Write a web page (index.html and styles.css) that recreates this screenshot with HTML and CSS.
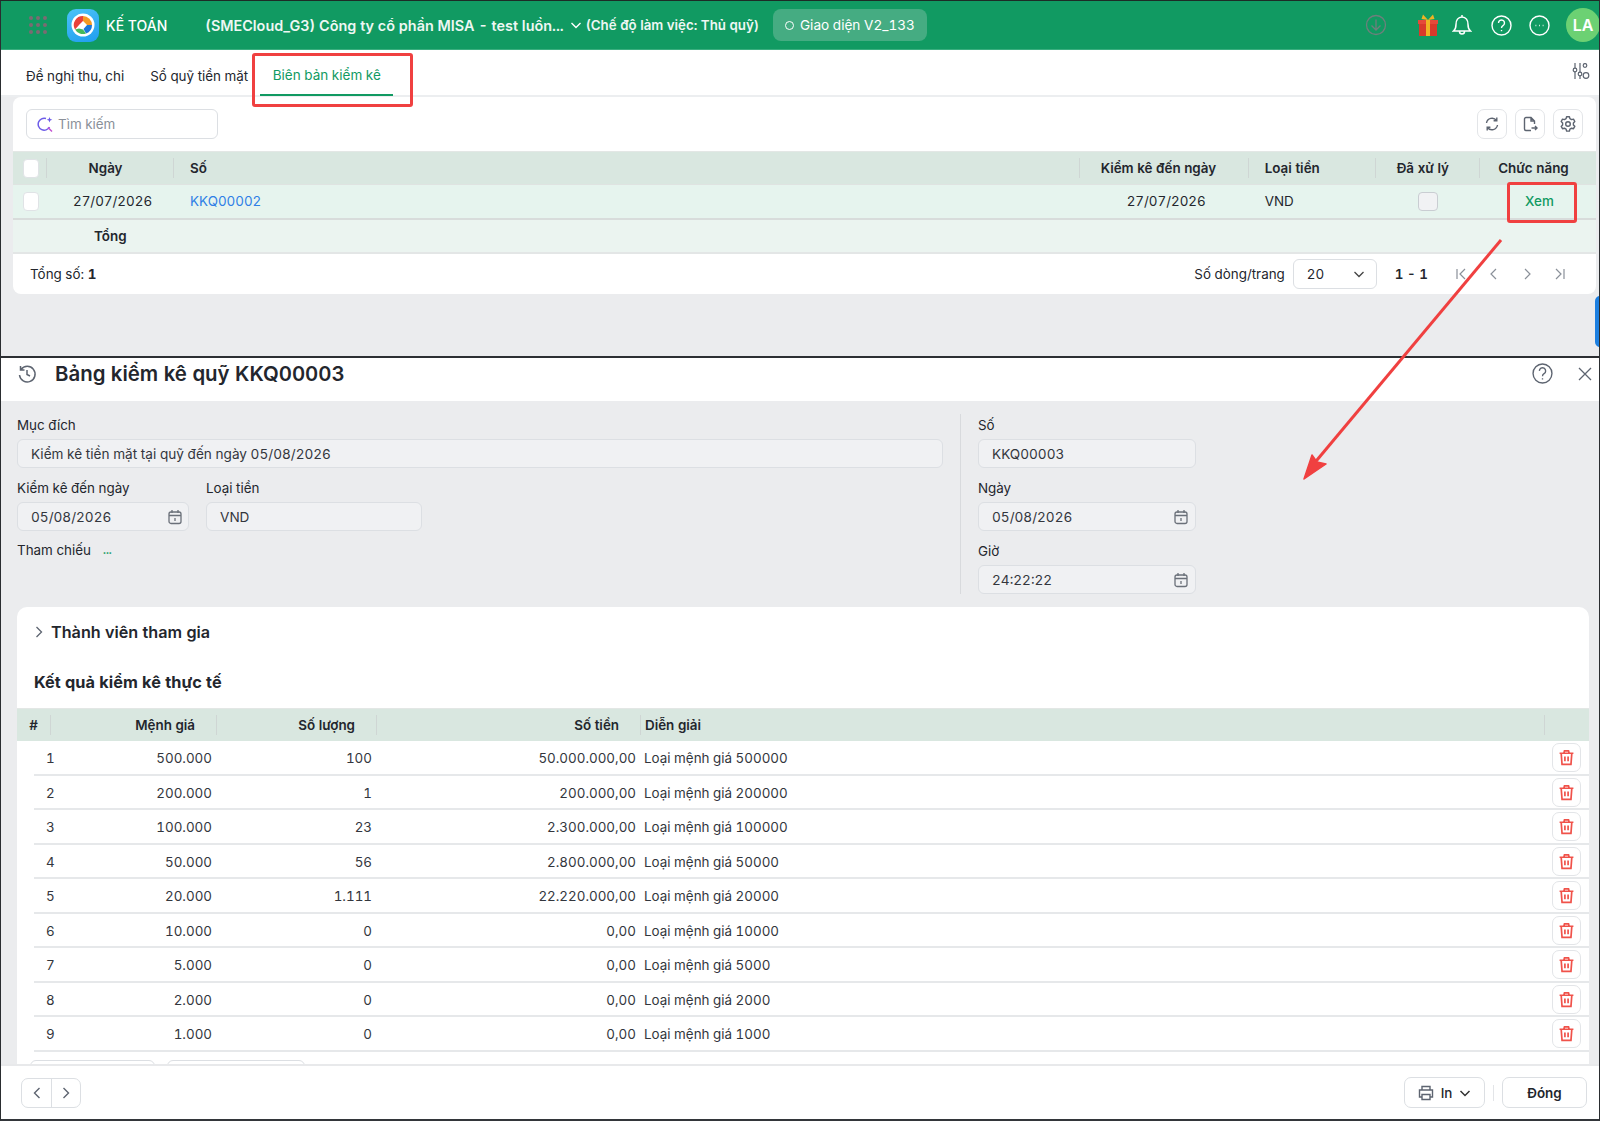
FILE: index.html
```html
<!DOCTYPE html>
<html lang="vi">
<head>
  <meta charset="UTF-8" />
  <title>Biên bản kiểm kê</title>
  <link rel="stylesheet" href="styles.css">
</head>
<body>
  <svg class="sprite" width="0" height="0">
    <symbol id="i-cal" viewBox="0 0 16 16" fill="none" stroke="currentColor" stroke-width="1.3">
      <rect x="2" y="3" width="12" height="11.5" rx="2"/><path d="M5 1v3M11 1v3M2 6.5h12M8 9v3"/>
    </symbol>
    <symbol id="i-trash" viewBox="0 0 16 16" fill="none" stroke="currentColor" stroke-width="1.6">
      <path d="M1.5 4h13M5.5 4l.6-2.3h3.8L10.500 4M3 4l.8 10.500h8.400L13 4M6.500 7v4.500M9.500 7v4.500"/>
    </symbol>
  </svg>

  <div class="page">
    <section class="win-top">
      <header class="topbar">
        <div class="apps">
          <i></i><i></i><i></i><i></i><i></i><i></i><i></i><i></i><i></i>
        </div>
        <div class="logo">
          <svg width="24" height="24" viewBox="0 0 24 24">
            <circle cx="12" cy="12" r="11.500" fill="#fff"/>
            <path d="M12 3a9 9 0 0 1 9 9h-5l-4-4z" fill="#f59a23"/>
            <path d="M21 12a9 9 0 0 1-6 8.500L12.500 16l3.500-4z" fill="#1c78d8"/>
            <path d="M15 20.500A9 9 0 0 1 4 16.500l4-1 4 1z" fill="#45b95c"/>
            <path d="M4 16.500A9 9 0 0 1 12 3v5l-4 4z" fill="#e8413a"/>
            <rect x="9.500" y="9.500" width="5" height="5" fill="#fff" transform="rotate(45 12 12)"/>
          </svg>
        </div>
        <span class="app-name">KẾ TOÁN</span>
        <span class="company">(SMECloud_G3) Công ty cổ phần MISA - test luồn...</span>
        <svg class="co-caret" width="12" height="12" viewBox="0 0 12 12" fill="none" stroke="#fff" stroke-width="1.4"><path d="M1.500 4l4.500 4.500L10.500 4"/></svg>
        <span class="work-mode">(Chế độ làm việc: Thủ quỹ)</span>
        <span class="theme-badge"><i class="theme-dot"></i>Giao diện V2_133</span>
        <div class="top-icons">
          <svg class="ic-down" width="22" height="22" viewBox="0 0 22 22" fill="none" stroke="#6f7f7c" stroke-width="1.300"><circle cx="11" cy="11" r="9.500"/><path d="M11 5.500v10.500M6.500 11.500L11 16l4.500-4.500"/></svg>
          <svg class="ic-gift" width="22" height="24" viewBox="0 0 22 24"><rect x="2" y="9" width="18" height="14" fill="#d8392b"/><rect x="1" y="7" width="20" height="4" fill="#e5493a"/><rect x="9" y="7" width="4" height="16" fill="#f0b323"/><path d="M11 7L6 1.500 4.500 6zM11 7l5-5.500L17.500 6z" fill="#f0b323"/></svg>
          <svg class="ic-bell" width="20" height="22" viewBox="0 0 20 22" fill="none" stroke="#fff" stroke-width="1.500"><path d="M1.500 17h17c-1.800-1.500-2.500-3-2.500-6.500C16 6.500 14 3 10 3s-6 3.500-6 7.500C4 14 3.300 15.500 1.500 17zM7.500 17.500a2.500 2.500 0 0 0 5 0M10 1v2"/></svg>
          <svg class="ic-help" width="21" height="21" viewBox="0 0 21 21" fill="none" stroke="#fff" stroke-width="1.400"><circle cx="10.500" cy="10.500" r="9.500"/><path d="M7.500 8a3 3 0 1 1 4.500 2.600c-1 .6-1.500 1.200-1.500 2.400"/><path d="M10.500 15v1.200"/></svg>
          <svg class="ic-more" width="21" height="21" viewBox="0 0 21 21" fill="none" stroke="#fff" stroke-width="1.400"><circle cx="10.500" cy="10.500" r="9.500"/><path d="M6.500 10.500h.8M10.100 10.500h.8M13.700 10.500h.8"/></svg>
          <span class="avatar">LA</span>
        </div>
      </header>

      <nav class="tabs">
        <a class="tab">Đề nghị thu, chi</a>
        <a class="tab">Sổ quỹ tiền mặt</a>
        <a class="tab tab-active">Biên bản kiểm kê</a>
        <svg class="tab-tune" width="18" height="18" viewBox="0 0 18 18" fill="none" stroke="#5d6470" stroke-width="1.200"><path d="M3 1v16M8 1v16M13 1v4"/><circle cx="3" cy="8" r="1.800" fill="#fff"/><circle cx="8" cy="12" r="1.800" fill="#fff"/><circle cx="13" cy="3.500" r="1.800" fill="#fff"/><circle cx="14" cy="13.500" r="2.800"/></svg>
      </nav>

      <div class="list-card">
        <div class="toolbar">
          <label class="search">
            <svg width="17" height="17" viewBox="0 0 17 17" fill="none" stroke="#6d5ce8" stroke-width="1.500"><path d="M9 2.500a6 6 0 1 0 3.500 8.500"/><path d="M11 11.500l4 4" stroke="#c24fd0"/><path d="M12.500 1l.8 2 2 .8-2 .8-.8 2-.8-2-2-.8 2-.8z" fill="#6d5ce8" stroke="none"/></svg>
            <span>Tìm kiếm</span>
          </label>
          <div class="tool-btns">
            <button class="tool-btn"><svg width="16" height="16" viewBox="0 0 16 16" fill="none" stroke="#5d6470" stroke-width="1.400"><path d="M2.500 7a5.600 5.600 0 0 1 10-2.500M13.500 9a5.600 5.600 0 0 1-10 2.500M12.800 1.500v3.200H9.600M3.200 14.500v-3.200h3.200"/></svg></button>
            <button class="tool-btn"><svg width="16" height="16" viewBox="0 0 16 16" fill="none" stroke="#5d6470" stroke-width="1.400"><path d="M9 14.500H4a1.500 1.500 0 0 1-1.500-1.500V3A1.500 1.500 0 0 1 4 1.500h5L12.500 5v3M9 1.500V5h3.500M9.500 12h5.500M13 10l2 2-2 2"/></svg></button>
            <button class="tool-btn"><svg width="16" height="16" viewBox="0 0 16 16" fill="none" stroke="#5d6470" stroke-width="1.400" stroke-linejoin="round"><path d="M6.600 1.300h2.800l.5 1.900 1.700 1 1.900-.5 1.300 2.400-1.400 1.400v2l1.400 1.400-1.300 2.400-1.900-.5-1.700 1-.5 1.900H6.600l-.5-1.900-1.700-1-1.900.5L1.200 11l1.400-1.400v-2L1.200 6.100l1.300-2.400 1.900.5 1.700-1z" transform="translate(0 -.6)"/><circle cx="8" cy="8" r="2.300"/></svg></button>
          </div>
        </div>

        <table class="grid list-grid">
          <colgroup>
            <col class="c-check"><col class="c-date"><col class="c-no"><col class="c-upto"><col class="c-cur"><col class="c-done"><col class="c-act">
          </colgroup>
          <thead>
            <tr>
              <th><span class="cb"></span></th>
              <th class="center">Ngày</th>
              <th>Số</th>
              <th class="upto-head">Kiểm kê đến ngày</th>
              <th>Loại tiền</th>
              <th class="center">Đã xử lý</th>
              <th class="center">Chức năng</th>
            </tr>
          </thead>
          <tbody>
            <tr class="row-on">
              <td><span class="cb"></span></td>
              <td class="center date-cell">27/07/2026</td>
              <td><a class="link">KKQ00002</a></td>
              <td class="upto-cell">27/07/2026</td>
              <td>VND</td>
              <td class="center"><span class="cb cb-grey"></span></td>
              <td class="center"><a class="view">Xem</a></td>
            </tr>
            <tr class="row-total">
              <td></td>
              <td class="total-label">Tổng</td>
              <td colspan="5"></td>
            </tr>
          </tbody>
        </table>

        <div class="list-foot">
          <span>Tổng số: <b>1</b></span>
          <div class="pager">
            <span>Số dòng/trang</span>
            <span class="page-size">20
              <svg width="12" height="12" viewBox="0 0 12 12" fill="none" stroke="#444" stroke-width="1.300"><path d="M1.500 4l4.500 4.500L10.500 4"/></svg>
            </span>
            <b class="page-range">1 - 1</b>
            <svg class="page-arrow" width="12" height="14" viewBox="0 0 12 14" fill="none" stroke="#8a9099" stroke-width="1.200"><path d="M2 2v10M10 2L5 7l5 5"/></svg>
            <svg class="page-arrow" width="12" height="14" viewBox="0 0 12 14" fill="none" stroke="#8a9099" stroke-width="1.200"><path d="M8 2L3 7l5 5"/></svg>
            <svg class="page-arrow" width="12" height="14" viewBox="0 0 12 14" fill="none" stroke="#8a9099" stroke-width="1.200"><path d="M4 2l5 5-5 5"/></svg>
            <svg class="page-arrow" width="12" height="14" viewBox="0 0 12 14" fill="none" stroke="#8a9099" stroke-width="1.200"><path d="M2 2l5 5-5 5M10 2v10"/></svg>
          </div>
        </div>
      </div>
      <span class="side-tab"></span>
    </section>

    <section class="win-bottom">
      <header class="dlg-head">
        <svg width="20" height="20" viewBox="0 0 20 20" fill="none" stroke="#5d6470" stroke-width="1.500"><path d="M2.500 11A7.800 7.800 0 1 0 4 5.500M3.500 2v4h4M10 6v4.500l3 1.500"/></svg>
        <h1>Bảng kiểm kê quỹ KKQ00003</h1>
        <svg class="dlg-help" width="21" height="21" viewBox="0 0 20 20" fill="none" stroke="#5d6470" stroke-width="1.300"><circle cx="10" cy="10" r="9"/><path d="M7 7.500a3 3 0 1 1 4.500 2.600c-1 .6-1.500 1.200-1.500 2.400M10 14.500v1.200"/></svg>
        <svg class="dlg-close" width="14" height="14" viewBox="0 0 14 14" fill="none" stroke="#5d6470" stroke-width="1.300"><path d="M1 1l12 12M13 1L1 13"/></svg>
      </header>

      <div class="dlg-body">
        <div class="form">
          <div class="form-left">
            <div class="field">
              <label>Mục đích</label>
              <div class="input">Kiểm kê tiền mặt tại quỹ đến ngày 05/08/2026</div>
            </div>
            <div class="form-row">
              <div class="field f-upto">
                <label>Kiểm kê đến ngày</label>
                <div class="input">05/08/2026<svg class="cal"><use href="#i-cal"/></svg></div>
              </div>
              <div class="field f-cur">
                <label>Loại tiền</label>
                <div class="input">VND</div>
              </div>
            </div>
            <div class="ref"><span>Tham chiếu</span><a class="ref-more">...</a></div>
          </div>
          <div class="form-right">
            <div class="field">
              <label>Số</label>
              <div class="input">KKQ00003</div>
            </div>
            <div class="field">
              <label>Ngày</label>
              <div class="input">05/08/2026<svg class="cal"><use href="#i-cal"/></svg></div>
            </div>
            <div class="field">
              <label>Giờ</label>
              <div class="input">24:22:22<svg class="cal"><use href="#i-cal"/></svg></div>
            </div>
          </div>
        </div>

        <div class="detail-card">
          <div class="members">
            <svg width="10" height="12" viewBox="0 0 10 12" fill="none" stroke="#5d6470" stroke-width="1.300"><path d="M2.500 1l5 5-5 5"/></svg>
            Thành viên tham gia
          </div>
          <h2>Kết quả kiểm kê thực tế</h2>
          <table class="grid money-grid">
            <colgroup>
              <col class="m-idx"><col class="m-val"><col class="m-qty"><col class="m-amt"><col class="m-note"><col class="m-del">
            </colgroup>
            <thead>
              <tr>
                <th class="center">#</th>
                <th class="right th-r">Mệnh giá</th>
                <th class="right th-r">Số lượng</th>
                <th class="right th-r">Số tiền</th>
                <th>Diễn giải</th>
                <th></th>
              </tr>
            </thead>
            <tbody>
              <tr><td class="idx">1</td><td class="right">500.000</td><td class="right">100</td><td class="right">50.000.000,00</td><td>Loại mệnh giá 500000</td><td><button class="del"><svg><use href="#i-trash"/></svg></button></td></tr>
              <tr><td class="idx">2</td><td class="right">200.000</td><td class="right">1</td><td class="right">200.000,00</td><td>Loại mệnh giá 200000</td><td><button class="del"><svg><use href="#i-trash"/></svg></button></td></tr>
              <tr><td class="idx">3</td><td class="right">100.000</td><td class="right">23</td><td class="right">2.300.000,00</td><td>Loại mệnh giá 100000</td><td><button class="del"><svg><use href="#i-trash"/></svg></button></td></tr>
              <tr><td class="idx">4</td><td class="right">50.000</td><td class="right">56</td><td class="right">2.800.000,00</td><td>Loại mệnh giá 50000</td><td><button class="del"><svg><use href="#i-trash"/></svg></button></td></tr>
              <tr><td class="idx">5</td><td class="right">20.000</td><td class="right">1.111</td><td class="right">22.220.000,00</td><td>Loại mệnh giá 20000</td><td><button class="del"><svg><use href="#i-trash"/></svg></button></td></tr>
              <tr><td class="idx">6</td><td class="right">10.000</td><td class="right">0</td><td class="right">0,00</td><td>Loại mệnh giá 10000</td><td><button class="del"><svg><use href="#i-trash"/></svg></button></td></tr>
              <tr><td class="idx">7</td><td class="right">5.000</td><td class="right">0</td><td class="right">0,00</td><td>Loại mệnh giá 5000</td><td><button class="del"><svg><use href="#i-trash"/></svg></button></td></tr>
              <tr><td class="idx">8</td><td class="right">2.000</td><td class="right">0</td><td class="right">0,00</td><td>Loại mệnh giá 2000</td><td><button class="del"><svg><use href="#i-trash"/></svg></button></td></tr>
              <tr><td class="idx">9</td><td class="right">1.000</td><td class="right">0</td><td class="right">0,00</td><td>Loại mệnh giá 1000</td><td><button class="del"><svg><use href="#i-trash"/></svg></button></td></tr>
            </tbody>
          </table>
          <div class="peek">
            <span class="peek-btn p1"></span>
            <span class="peek-btn p2"></span>
          </div>
        </div>
      </div>

      <footer class="dlg-foot">
        <div class="nav-btns">
          <button><svg width="10" height="12" viewBox="0 0 10 12" fill="none" stroke="#5d6470" stroke-width="1.400"><path d="M7.500 1l-5 5 5 5"/></svg></button>
          <button><svg width="10" height="12" viewBox="0 0 10 12" fill="none" stroke="#5d6470" stroke-width="1.400"><path d="M2.500 1l5 5-5 5"/></svg></button>
        </div>
        <div class="foot-right">
          <button class="btn btn-print">
            <svg width="16" height="16" viewBox="0 0 16 16" fill="none" stroke="#5d6470" stroke-width="1.400"><path d="M4 5V1.500h8V5M4 12H1.500V5h13v7H12M4 9.500h8v5H4z"/></svg>
            In
            <svg width="12" height="12" viewBox="0 0 12 12" fill="none" stroke="#333" stroke-width="1.500"><path d="M1.500 4l4.500 4.500L10.500 4"/></svg>
          </button>
          <span class="foot-sep"></span>
          <button class="btn btn-close">Đóng</button>
        </div>
      </footer>
    </section>

    <!-- annotation drawn on top of the screenshot -->
    <span class="mark mark-tab"></span>
    <span class="mark mark-view"></span>
    <svg class="arrow" width="1600" height="1121" viewBox="0 0 1600 1121">
      <path d="M1501 240L1312 466" stroke="#f04040" stroke-width="3" fill="none"/>
      <path d="M1304 479l8-24 5 7 9 2z" fill="#f04040" stroke="#f04040" stroke-width="1.500" stroke-linejoin="round"/>
    </svg>
  </div>
</body>
</html>
```

FILE: styles.css
```css
* {
  box-sizing: border-box;
}
body {
  margin: 0;
  background: #ebecee;
  color: #23262d;
  font-family: Inter, "Noto Sans", sans-serif;
  font-size: 13.4px;
  font-variant-numeric: tabular-nums;
}
button {
  font: inherit;
  color: inherit;
  cursor: pointer;
}
.sprite {
  display: block;
}
.page {
  position: relative;
  width: 1600px;
  height: 1121px;
  overflow: hidden;
  border-left: 1px solid #2a2d30;
  border-right: 1px solid #2a2d30;
  border-top: 1px solid #1d2b26;
  border-bottom: 2px solid #33363a;
}

/* upper window */
.win-top {
  position: relative;
  height: 357px;
  background: #ebecee;
  border-bottom: 2px solid #2c2f33;
}
.topbar {
  display: flex;
  align-items: center;
  height: 49px;
  background: #119a62;
  color: #fff;
  border-bottom: 1px solid #3aae7f;
}
.apps {
  display: grid;
  grid-template-columns: repeat(3, 4px);
  gap: 3px;
  margin-left: 28px;
}
.apps i {
  width: 4px;
  height: 4px;
  border-radius: 50%;
  background: #7b6b72;
}
.logo {
  display: flex;
  align-items: center;
  justify-content: center;
  width: 32px;
  height: 33px;
  margin-left: 20px;
  border-radius: 9px;
  background: linear-gradient(160deg, #4cc3f7, #1f9df0);
}
.app-name {
  margin-left: 7px;
  font-size: 14px;
  font-weight: 500;
}
.company {
  margin-left: 38px;
  font-size: 14.400px;
  font-weight: 600;
  opacity: .93;
  white-space: nowrap;
}
.co-caret {
  margin-left: 6px;
}
.work-mode {
  margin-left: 4px;
  font-size: 13.300px;
  font-weight: 600;
  opacity: .93;
  white-space: nowrap;
}
.theme-badge {
  display: flex;
  align-items: center;
  height: 32px;
  margin-left: 14px;
  padding: 0 12px;
  border-radius: 8px;
  background: #45ac82;
  font-size: 13.600px;
  white-space: nowrap;
}
.theme-dot {
  width: 9px;
  height: 9px;
  margin-right: 6px;
  border: 1.5px solid #fff;
  border-radius: 50%;
}
.top-icons {
  display: flex;
  align-items: center;
  margin-left: auto;
}
.ic-gift {
  margin-left: 30px;
}
.ic-bell {
  margin-left: 13px;
}
.ic-help {
  margin-left: 19px;
}
.ic-more {
  margin-left: 17px;
}
.avatar {
  display: flex;
  align-items: center;
  justify-content: center;
  width: 34px;
  height: 34px;
  margin-left: 16px;
  margin-right: -1px;
  border-radius: 50%;
  background: #6cd173;
  font-size: 16px;
  font-weight: 600;
}
.tabs {
  display: flex;
  align-items: center;
  height: 47px;
  padding-left: 13px;
  background: #fff;
  border-bottom: 2px solid #eceef0;
}
.tab {
  display: flex;
  align-items: center;
  height: 46px;
  padding: 6px 12px 0;
  white-space: nowrap;
}
.tab + .tab {
  margin-left: 2px;
}
.tab-active {
  color: #119a62;
  border-bottom: 2px solid #119a62;
  padding: 7px 12.500px 0;
  font-size: 13.500px;
}
.tab + .tab-active {
  margin-left: 0;
}
.tab-tune {
  margin-left: auto;
  margin-right: 9px;
  margin-top: -4px;
}
.list-card {
  margin: 0 3px 0 12px;
  height: 197px;
  background: #fff;
  border-radius: 8px;
}
.toolbar {
  display: flex;
  align-items: center;
  justify-content: space-between;
  height: 54px;
  padding: 0 13px;
}
.search {
  display: flex;
  align-items: center;
  gap: 4px;
  width: 192px;
  height: 30px;
  padding: 0 10px;
  border: 1px solid #dcdfe3;
  border-radius: 6px;
  color: #8a9099;
}
.tool-btns {
  display: flex;
  gap: 8px;
}
.tool-btn {
  display: flex;
  align-items: center;
  justify-content: center;
  width: 30px;
  height: 30px;
  padding: 0;
  background: #fff;
  border: 1px solid #e3e5e8;
  border-radius: 7px;
}
.grid {
  width: 100%;
  table-layout: fixed;
  border-collapse: collapse;
}
.grid th {
  font-weight: 600;
  text-align: left;
  background-color: #d9e7e0;
  background-image: linear-gradient(#cfd6d4, #cfd6d4);
  background-repeat: no-repeat;
  background-size: 1px 20px;
  background-position: left center;
  white-space: nowrap;
}
.grid th:first-child {
  background-image: none;
}
.center {
  text-align: center;
}
.grid th.center {
  text-align: center;
}
.right,
.grid th.right {
  text-align: right;
}
.c-check { width: 33px; }
.c-date { width: 127px; }
.c-no { width: 905px; }
.c-upto { width: 169px; }
.c-cur { width: 127px; }
.c-done { width: 104px; }
.c-act { width: 117px; }
.list-grid th {
  height: 33px;
  padding: 0 17px;
  border-top: 1px solid #e3e7e5;
  border-bottom: 1px solid #dfe3e1;
}
.list-grid th.center {
  padding: 0 8px 0 0;
}
.list-grid th:first-child,
.list-grid td:first-child {
  padding: 0 0 0 10px;
}
.list-grid td {
  height: 34px;
  padding: 0 17px;
  white-space: nowrap;
}
.list-grid td.center {
  padding: 0;
}
.list-grid td.date-cell {
  padding-left: 6px;
}
.list-grid th.upto-head {
  padding-left: 22px;
}
.list-grid td.upto-cell {
  padding: 0 42px 0 0;
  text-align: right;
}
.row-on td {
  background: #e6f4ee;
  border-bottom: 2px solid #d8dcdb;
}
.row-total td {
  background: #ebf4f0;
  border-bottom: 2px solid #e3e6e6;
}
.list-grid .total-label {
  padding: 0 0 0 48px;
  font-weight: 600;
}
.cb {
  display: block;
  width: 16px;
  height: 19px;
  background: #fff;
  border: 1px solid #e0e3e6;
  border-radius: 4px;
}
.cb-grey {
  width: 20px;
  margin: 0 0 0 43px;
  background: #f1f2f4;
  border-color: #c9cdd2;
}
.link {
  color: #2f7fe6;
}
.view {
  margin-left: 4px;
  color: #119a62;
  font-weight: 500;
}
.list-foot {
  display: flex;
  align-items: center;
  justify-content: space-between;
  height: 40px;
  padding: 0 30px 0 17px;
}
.pager {
  display: flex;
  align-items: center;
}
.page-size {
  display: flex;
  align-items: center;
  justify-content: space-between;
  width: 84px;
  height: 30px;
  margin-left: 8px;
  padding: 0 11px 0 13px;
  border: 1px solid #dcdfe3;
  border-radius: 6px;
}
.page-range {
  margin: 0 27px 0 18px;
  font-weight: 600;
}
.page-arrow {
  margin-right: 21px;
}
.page-arrow:last-child {
  margin-right: 0;
}
.side-tab {
  position: absolute;
  right: -1px;
  top: 295px;
  width: 5px;
  height: 51px;
  border-radius: 5px 0 0 5px;
  background: #1c7fe0;
}

/* lower window */
.win-bottom {
  display: flex;
  flex-direction: column;
  height: 761px;
  overflow: hidden;
}
.dlg-head {
  display: flex;
  align-items: center;
  flex: none;
  height: 43px;
  padding: 0 7px 12px 16px;
  background: #fff;
}
.dlg-head h1 {
  margin: 0 0 0 18px;
  font-size: 20.400px;
  font-weight: 600;
}
.dlg-help {
  margin-left: auto;
}
.dlg-close {
  margin-left: 25px;
}
.dlg-body {
  flex: 1;
  min-height: 0;
  overflow: hidden;
  padding: 13px 11px 0 16px;
  background: #ebecee;
}
.form {
  display: flex;
  height: 193px;
}
.form-left {
  width: 926px;
  flex: none;
}
.form-right {
  width: 236px;
  flex: none;
  height: 180px;
  margin-left: 17px;
  padding-left: 17px;
  border-left: 1px solid #d8dadd;
}
.field label {
  display: block;
  height: 25px;
  padding-top: 1px;
  line-height: 20px;
}
.field {
  margin-bottom: 9px;
}
.input {
  display: flex;
  align-items: center;
  justify-content: space-between;
  height: 29px;
  padding: 0 6px 0 13px;
  background: #f0f1f3;
  border: 1px solid #dcdfe3;
  border-radius: 6px;
  color: #33363d;
  font-size: 13.600px;
}
.form-row {
  display: flex;
  gap: 17px;
}
.f-upto { width: 172px; }
.f-cur { width: 216px; }
.f-upto .input {
  padding-right: 5px;
}
.ref {
  display: flex;
  align-items: center;
  gap: 12px;
  height: 20px;
}
.ref-more {
  color: #119a62;
  font-size: 11px;
  font-weight: 700;
}
.cal {
  width: 16px;
  height: 16px;
  color: #6a7079;
}
.detail-card {
  width: 1572px;
  height: 600px;
  background: #fff;
  border-radius: 10px 10px 0 0;
}
.members {
  display: flex;
  align-items: center;
  gap: 7px;
  height: 50px;
  padding-left: 17px;
  font-size: 16.200px;
  font-weight: 600;
}
h2 {
  margin: 0;
  height: 51px;
  padding: 0 0 0 17px;
  line-height: 50px;
  font-size: 16.300px;
  font-weight: 700;
}
.m-idx { width: 33px; }
.m-val { width: 166px; }
.m-qty { width: 160px; }
.m-amt { width: 264px; }
.m-note { width: 904px; }
.m-del { width: 45px; }
.money-grid {
  border-collapse: separate;
  border-spacing: 0;
}
.money-grid th {
  height: 33px;
  padding: 0 5px;
  border-top: 1px solid #e3e7e5;
}
.money-grid th.th-r {
  padding-right: 21px;
}
.money-grid th:nth-child(2) {
  background-image: linear-gradient(#cfd6d4, #cfd6d4);
}
.money-grid td {
  height: 34.500px;
  padding: 2px 4px 0;
  border-bottom: 2px solid #e6e8ea;
  color: #33363d;
  white-space: nowrap;
}
.money-grid td:first-child {
  border-bottom-color: transparent;
  background: linear-gradient(#e6e8ea, #e6e8ea) 17px bottom / 100% 2px no-repeat border-box;
}
.money-grid .idx {
  padding-left: 29px;
}
.money-grid td:last-child {
  padding: 1px 0 0;
}
.del {
  display: flex;
  align-items: center;
  justify-content: center;
  width: 29px;
  height: 29px;
  padding: 0;
  margin-left: 8px;
  background: #fff;
  border: 1px solid #e3e5e8;
  border-radius: 7px;
}
.del svg {
  width: 17px;
  height: 17px;
  color: #f0524a;
}
.peek {
  display: flex;
  gap: 12px;
  padding: 8px 0 0 13px;
}
.peek-btn {
  height: 30px;
  border: 1px solid #dcdfe3;
  border-radius: 6px;
}
.p1 { width: 125px; }
.p2 { width: 138px; }
.dlg-foot {
  display: flex;
  align-items: center;
  justify-content: space-between;
  flex: none;
  height: 55px;
  padding: 0 12px 0 20px;
  background: #fff;
  border-top: 2px solid #e8e9eb;
}
.nav-btns {
  display: flex;
  height: 30px;
  border: 1px solid #dcdfe3;
  border-radius: 7px;
}
.nav-btns button {
  display: flex;
  align-items: center;
  justify-content: center;
  width: 29px;
  padding: 0;
  background: none;
  border: none;
}
.nav-btns button + button {
  border-left: 1px solid #dcdfe3;
}
.foot-right {
  display: flex;
  align-items: center;
}
.btn {
  display: flex;
  align-items: center;
  justify-content: center;
  height: 31px;
  background: #fff;
  border: 1px solid #dcdfe3;
  border-radius: 7px;
  font-weight: 500;
}
.btn-print {
  gap: 7px;
  width: 81px;
}
.btn-close {
  width: 85px;
  font-weight: 600;
}
.foot-sep {
  width: 1px;
  height: 16px;
  margin: 0 8px;
  background: #e3e5e8;
}

/* red annotation */
.mark {
  position: absolute;
  border: 3px solid #f04040;
  border-radius: 3px;
}
.mark-tab {
  left: 251px;
  top: 52px;
  width: 161px;
  height: 54px;
}
.mark-view {
  left: 1506px;
  top: 181px;
  width: 70px;
  height: 41px;
}
.arrow {
  position: absolute;
  left: -1px;
  top: -1px;
  pointer-events: none;
}
```
